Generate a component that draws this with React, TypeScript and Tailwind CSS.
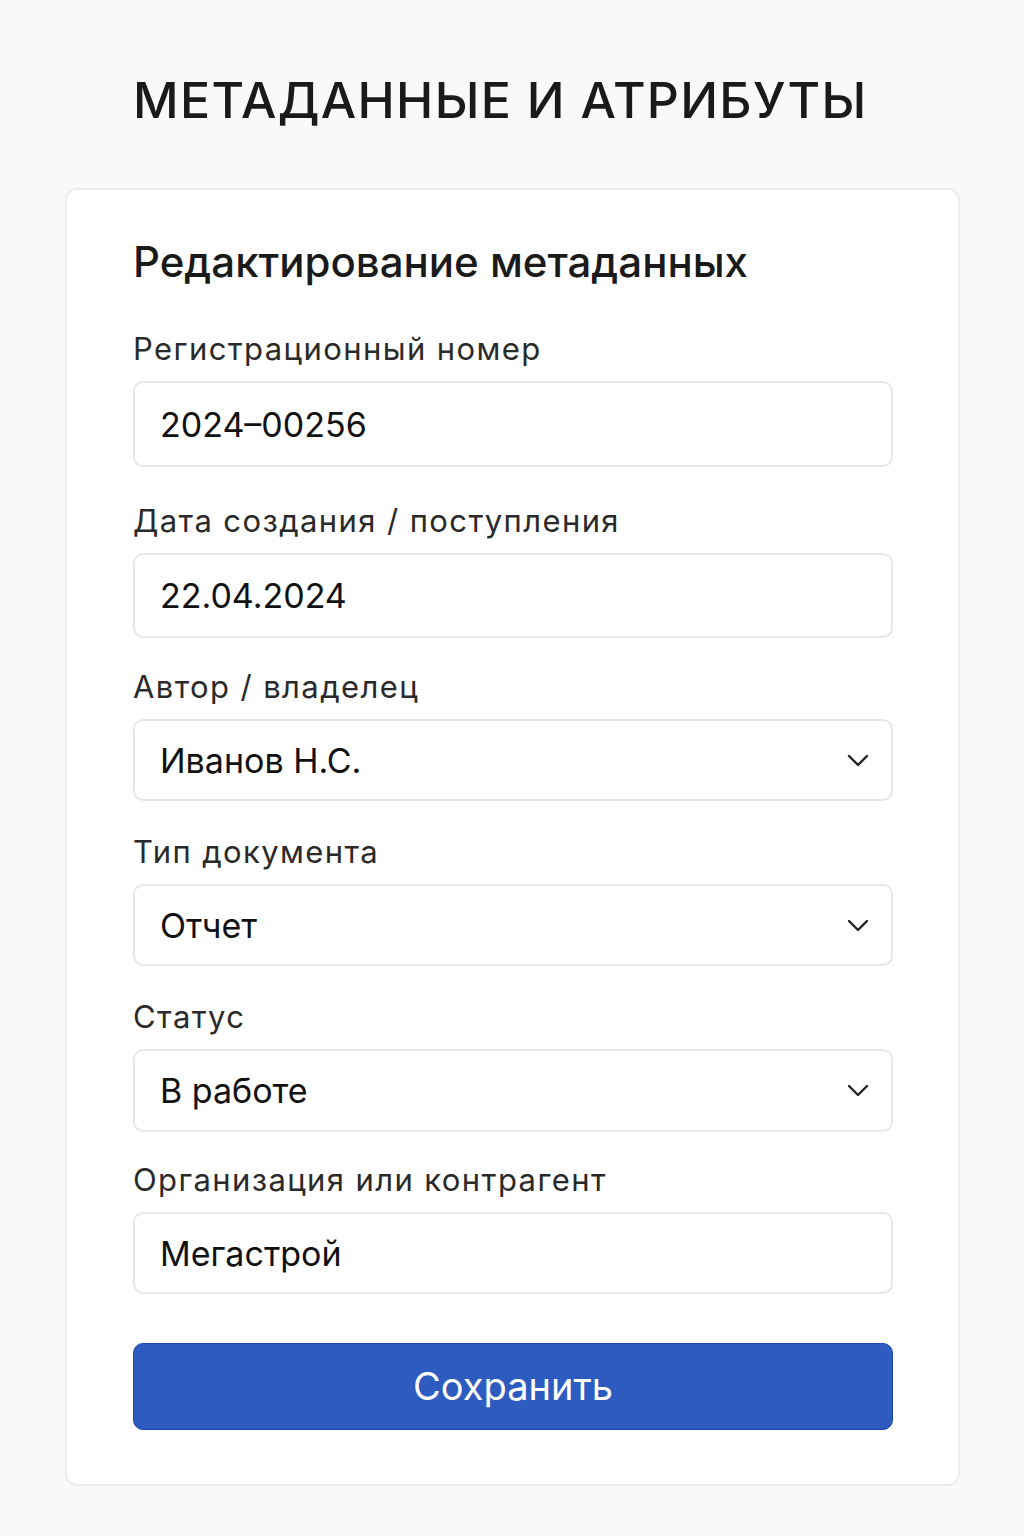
import React from "react";

const Chevron = () => (
  <svg width="22" height="13" viewBox="0 0 22 13" fill="none" stroke="#222" strokeWidth="2.4" strokeLinecap="round" strokeLinejoin="round">
    <path d="M2 2l9 9 9-9" />
  </svg>
);

type F = { label: string; value: string; select?: boolean; h: number; mt: string };

const fields: F[] = [
  { label: "Регистрационный номер", value: "2024–00256", h: 86, mt: "mt-[41px]" },
  { label: "Дата создания / поступления", value: "22.04.2024", h: 85, mt: "mt-[34px]" },
  { label: "Автор / владелец", value: "Иванов Н.С.", select: true, h: 82, mt: "mt-[29px]" },
  { label: "Тип документа", value: "Отчет", select: true, h: 82, mt: "mt-[31px]" },
  { label: "Статус", value: "В работе", select: true, h: 83, mt: "mt-[31px]" },
  { label: "Организация или контрагент", value: "Мегастрой", h: 82, mt: "mt-[28px]" },
];

export default function App() {
  return (
    <div className="min-h-[1536px] bg-[#f9f9f9] pt-[70px] pb-[52px]" style={{ fontFamily: "Inter, 'Noto Sans', sans-serif" }}>
      <h1 className="ml-[133px] text-[50px] leading-[60px] font-medium text-[#1a1a1a] tracking-[1.3px]">
        МЕТАДАННЫЕ И АТРИБУТЫ
      </h1>
      <div className="ml-[65px] mr-[64px] mt-[58px] bg-white border-2 border-[#ececec] rounded-[12px] pl-[66px] pr-[65px] pt-[46px] pb-[54px]">
        <h2 className="text-[42px] leading-[52px] font-medium text-[#1a1a1a]">Редактирование метаданных</h2>
        {fields.map((f) => (
          <div key={f.label} className={`flex flex-col ${f.mt}`}>
            <label className="text-[31px] leading-[40px] text-[#2a2a2a] tracking-[1.4px] mb-[12px]">{f.label}</label>
            <div
              className="flex items-center justify-between border-2 border-[#e8e8e8] rounded-[10px] pl-[25px] pr-[22px] bg-white"
              style={{ height: f.h }}
            >
              <span className="text-[34px] text-[#111]">{f.value}</span>
              {f.select && <Chevron />}
            </div>
          </div>
        ))}
        <button className="mt-[49px] w-full h-[87px] rounded-[10px] bg-[#2d5bc0] border border-[#1c45b3] text-white text-[38px]">
          Сохранить
        </button>
      </div>
    </div>
  );
}
